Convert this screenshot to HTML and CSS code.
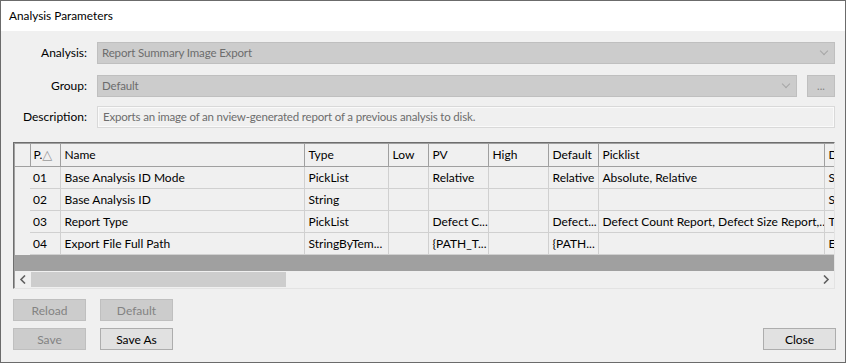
FILE: index.html
```html
<!DOCTYPE html>
<html>
<head>
<meta charset="utf-8">
<link rel="stylesheet" href="styles.css">
</head>
<body>
<div class="window">
  <div class="titlebar">Analysis Parameters</div>
  <div class="content">
    <div class="form">
      <label class="lbl">Analysis:</label>
      <div class="combo"><span>Report Summary Image Export</span><i class="chev"></i></div>
      <label class="lbl">Group:</label>
      <div class="grouprow">
        <div class="combo"><span>Default</span><i class="chev"></i></div>
        <div class="dots">...</div>
      </div>
      <label class="lbl lbl-desc">Description:</label>
      <div class="textbox">Exports an image of an nview-generated report of a previous analysis to disk.</div>
    </div>

    <div class="grid">
      <div class="viewport">
        <table class="tbl">
          <colgroup>
            <col class="c-rh"><col class="c-p"><col class="c-name"><col class="c-type"><col class="c-low"><col class="c-pv"><col class="c-high"><col class="c-def"><col class="c-pick"><col class="c-desc">
          </colgroup>
          <thead>
            <tr>
              <th class="rh"></th>
              <th class="sort">P.<span class="tri">△</span></th>
              <th>Name</th><th>Type</th><th>Low</th><th>PV</th><th>High</th><th>Default</th><th>Picklist</th><th>Description</th>
            </tr>
          </thead>
          <tbody>
            <tr><td class="rh"></td><td>01</td><td>Base Analysis ID Mode</td><td>PickList</td><td></td><td>Relative</td><td></td><td>Relative</td><td>Absolute, Relative</td><td>Specifies the mode</td></tr>
            <tr><td class="rh"></td><td>02</td><td>Base Analysis ID</td><td>String</td><td></td><td></td><td></td><td></td><td></td><td>Specifies the ID</td></tr>
            <tr><td class="rh"></td><td>03</td><td>Report Type</td><td>PickList</td><td></td><td>Defect C...</td><td></td><td>Defect...</td><td>Defect Count Report, Defect Size Report,...</td><td>The report type</td></tr>
            <tr><td class="rh"></td><td>04</td><td>Export File Full Path</td><td>StringByTem...</td><td></td><td>{PATH_T...</td><td></td><td>{PATH...</td><td></td><td>Export path</td></tr>
          </tbody>
        </table>
        <div class="empty"></div>
      </div>
      <div class="hscroll">
        <span class="arrow">
          <svg width="8" height="9" viewBox="0 0 8 9"><path d="M6 0.5 L2 4.5 L6 8.5" fill="none" stroke="#606060" stroke-width="1.6"/></svg>
        </span>
        <div class="track"><div class="thumb"></div></div>
        <span class="arrow">
          <svg width="8" height="9" viewBox="0 0 8 9"><path d="M2 0.5 L6 4.5 L2 8.5" fill="none" stroke="#606060" stroke-width="1.6"/></svg>
        </span>
      </div>
    </div>

    <div class="buttons">
      <div class="btncol">
        <div class="btnrow">
          <button class="btn disabled">Reload</button>
          <button class="btn disabled">Default</button>
        </div>
        <div class="btnrow">
          <button class="btn disabled">Save</button>
          <button class="btn">Save As</button>
        </div>
      </div>
      <button class="btn close">Close</button>
    </div>
  </div>
</div>
</body>
</html>
```
FILE: styles.css
```css
* { box-sizing: border-box; }
html, body { margin: 0; padding: 0; background: #f0f0f0; }
body {
  font-family: "Segoe UI", "Lato", "Noto Sans", sans-serif;
  font-size: 12px;
  color: #000;
}
.window {
  width: 846px;
  height: 363px;
  border: 1px solid #6b6b6b;
  background: #f0f0f0;
  display: flex;
  flex-direction: column;
}
.titlebar {
  height: 30px;
  background: #fff;
  padding-left: 8px;
  line-height: 30px;
  color: #000;
  font-size: 11.8px;
}
.content {
  flex: 1;
  padding: 11px 10px 0 12px;
  display: flex;
  flex-direction: column;
}
.form {
  display: grid;
  grid-template-columns: 74px 1fr;
  column-gap: 10px;
  row-gap: 11px;
}
.lbl {
  text-align: right;
  line-height: 21px;
}
.lbl-desc { margin-top: -2px; }
.combo {
  height: 22px;
  background: #cccccc;
  border: 1px solid #bfbfbf;
  color: #6d6d6d;
  display: flex;
  align-items: center;
  padding-left: 4px;
  padding-bottom: 1px;
  font-size: 11.5px;
  letter-spacing: -0.15px;
}
.combo span { flex: 1; }
.chev {
  width: 10px;
  height: 10px;
  margin-right: 5px;
  position: relative;
}
.chev::before {
  content: "";
  position: absolute;
  left: 2px;
  top: 0;
  width: 5px;
  height: 5px;
  border-right: 1px solid #a6a6a6;
  border-bottom: 1px solid #a6a6a6;
  transform: rotate(45deg);
}
.grouprow {
  display: flex;
  gap: 10px;
}
.grouprow .combo { flex: 1; }
.dots {
  width: 28px;
  height: 22px;
  background: #cccccc;
  border: 1px solid #bfbfbf;
  color: #838383;
  text-align: center;
  line-height: 20px;
  font-size: 11px;
}
.textbox {
  height: 22px;
  background: #f0f0f0;
  border: 1px solid #d9d9d9;
  box-shadow: inset 0 0 0 1px #fafafa;
  color: #6d6d6d;
  padding-left: 5px;
  line-height: 19px;
  margin-top: -2px;
  font-size: 11.5px;
  letter-spacing: -0.18px;
}
.grid {
  margin-top: 14px;
  width: 822px;
  height: 147px;
  border-left: 1px solid #6e6e6e;
  border-top: 1px solid #6e6e6e;
  border-right: 1px solid #e3e3e3;
  border-bottom: 1px solid #e3e3e3;
  display: flex;
  flex-direction: column;
  overflow: hidden;
}
.viewport {
  flex: 1;
  overflow: hidden;
  display: flex;
  flex-direction: column;
  border-left: 1px solid #a0a0a0;
  border-top: 1px solid #a0a0a0;
}
.tbl {
  border-collapse: collapse;
  table-layout: fixed;
  width: 889px;
  flex: none;
}
.c-rh { width: 15px; }
.c-p { width: 30px; }
.c-name { width: 244px; }
.c-type { width: 84px; }
.c-low { width: 40px; }
.c-pv { width: 60px; }
.c-high { width: 60px; }
.c-def { width: 50px; }
.c-pick { width: 226px; }
.c-desc { width: 80px; }
.tbl th, .tbl td {
  height: 22px;
  line-height: 20px;
  padding: 1px 0 0 4px;
  white-space: nowrap;
  overflow: hidden;
  text-align: left;
  font-weight: normal;
  background: #f0f0f0;
}
.tbl th {
  border-right: 1px solid #a0a0a0;
  border-bottom: 1px solid #a0a0a0;
}
.tbl td {
  border-right: 1px solid #d0d0d0;
  border-bottom: 1px solid #d0d0d0;
}
.tbl tr { height: 22px; }
.tbl td.rh { border-bottom: none; border-right: none; }
.tbl th.rh { border-right: 1px solid #a0a0a0; }
.tbl th.sort { padding-left: 3px; }
.tbl td:nth-child(2) { padding-left: 3px; }
.tri {
  color: #9a9a9a;
  font-family: "DejaVu Sans", sans-serif;
  font-size: 13px;
}
.empty {
  flex: 1;
  background: #a0a0a0;
}
.hscroll {
  height: 17px;
  background: #f0f0f0;
  display: flex;
  align-items: center;
  border-left: 1px solid #a0a0a0;
}
.arrow {
  width: 16px;
  height: 17px;
  display: flex;
  align-items: center;
  justify-content: center;
}
.track {
  flex: 1;
  height: 17px;
  padding: 1px 0;
}
.thumb {
  width: 255px;
  height: 15px;
  background: #cdcdcd;
}
.buttons {
  margin-top: 10px;
  display: flex;
  justify-content: space-between;
  align-items: flex-end;
}
.btncol {
  display: flex;
  flex-direction: column;
  gap: 7px;
}
.btnrow {
  display: flex;
  gap: 14px;
}
.btn {
  width: 73px;
  height: 22px;
  font-family: inherit;
  font-size: inherit;
  background: #e1e1e1;
  border: 1px solid #adadad;
  color: #000;
  padding: 0;
  margin: 0;
}
.btn.disabled {
  background: #cccccc;
  border-color: #bfbfbf;
  color: #838383;
}
.close { margin-right: -1px; }
```
